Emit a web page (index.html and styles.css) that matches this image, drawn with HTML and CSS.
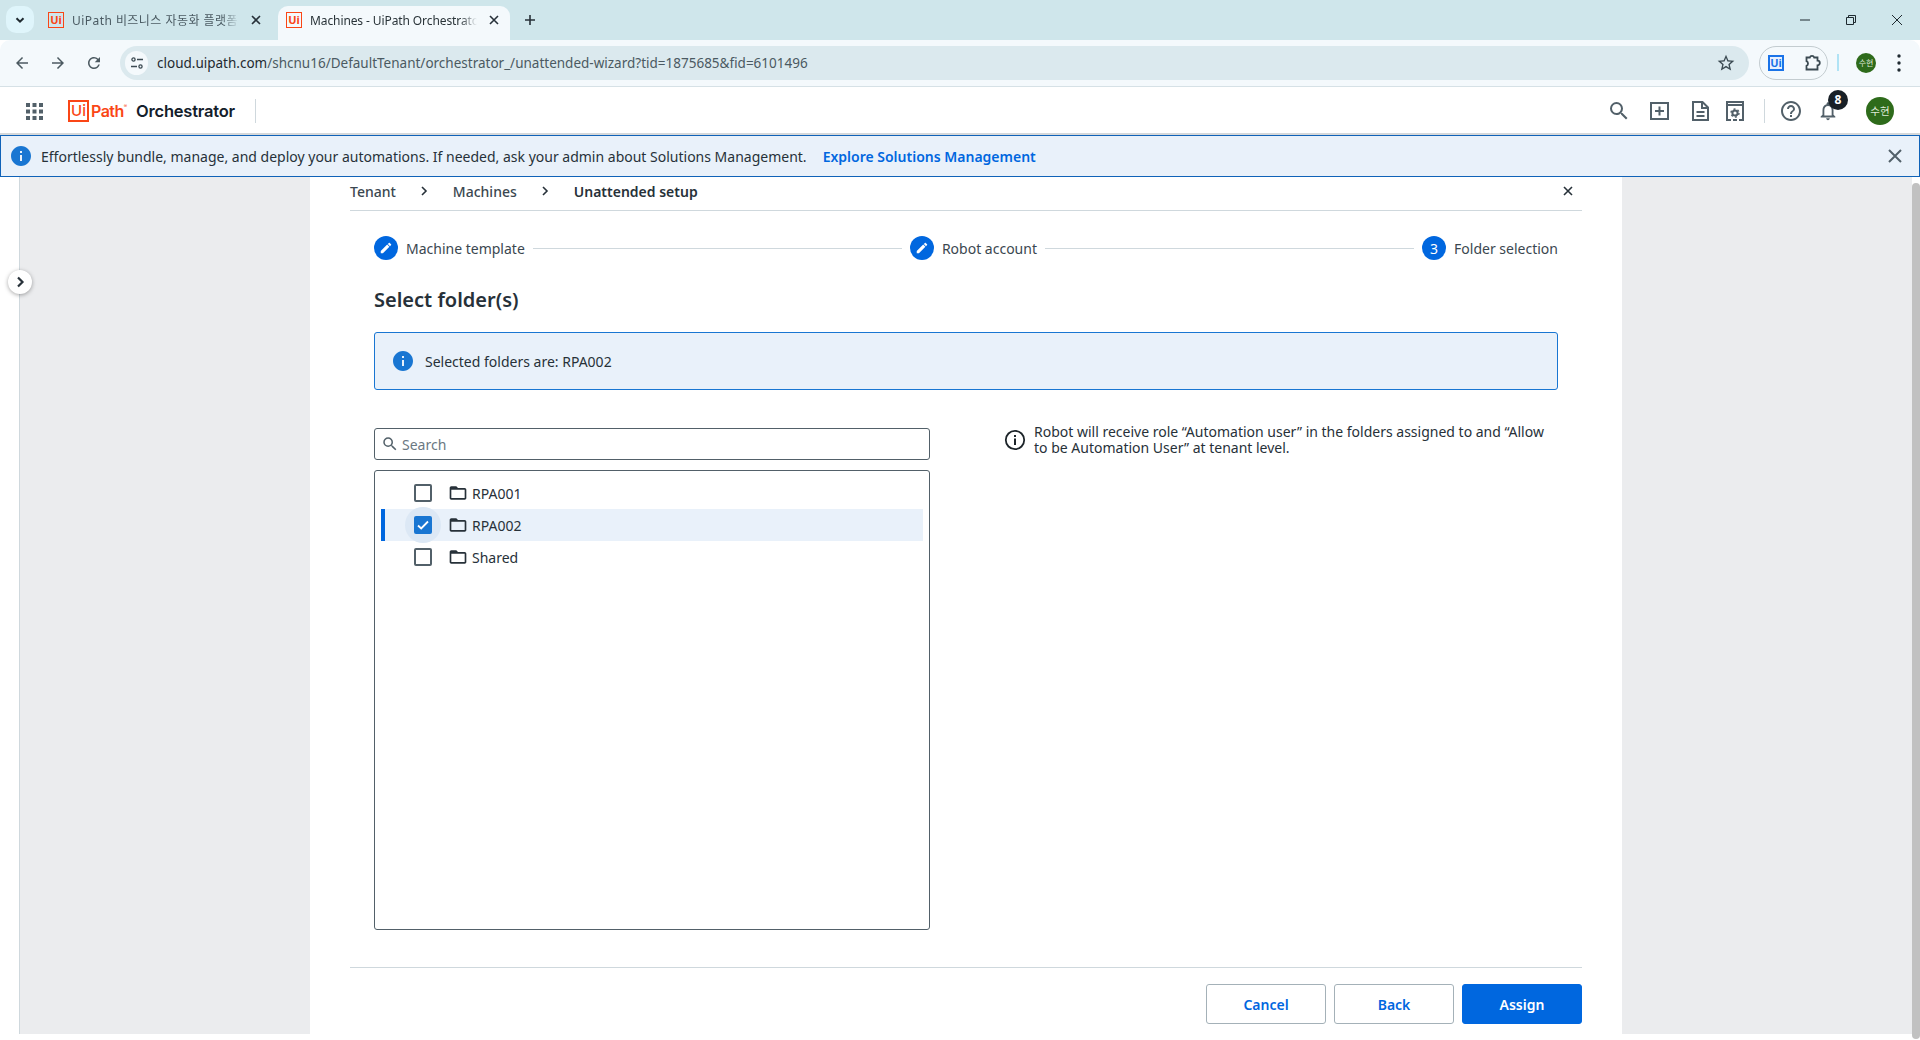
FILE: index.html
```html
<!DOCTYPE html>
<html lang="en">
<head>
<meta charset="utf-8">
<title>Machines - UiPath Orchestrator</title>
<link rel="stylesheet" href="styles.css">
</head>
<body>
<div class="tabstrip">
  <button class="tab-menu"><svg width="12" height="12" viewBox="0 0 12 12"><path d="M2.5 4.2 6 7.7l3.5-3.5" class="st2"/></svg></button>
  <div class="tab tab-idle">
    <span class="favicon">Ui</span>
    <span class="tab-title tab-title-ko">UiPath 비즈니스 자동화 플랫폼</span>
    <svg class="tab-x" width="10" height="10" viewBox="0 0 10 10"><path d="M1 1l8 8M9 1 1 9" class="st15"/></svg>
  </div>
  <div class="tab tab-active">
    <span class="favicon">Ui</span>
    <span class="tab-title tab-title-en">Machines - UiPath Orchestrator</span>
    <svg class="tab-x" width="10" height="10" viewBox="0 0 10 10"><path d="M1 1l8 8M9 1 1 9" class="st15"/></svg>
  </div>
  <svg class="tab-plus" width="12" height="12" viewBox="0 0 12 12"><path d="M6 1v10M1 6h10" class="st15"/></svg>
  <div class="win-controls">
    <svg width="10" height="10" viewBox="0 0 10 10"><path d="M0 5h10" class="st1"/></svg>
    <svg width="10" height="10" viewBox="0 0 10 10"><path d="M.5 2.5h7v7h-7zM2.5 2.5v-2h7v7h-2" class="st1"/></svg>
    <svg width="10" height="10" viewBox="0 0 10 10"><path d="M0 0l10 10M10 0 0 10" class="st1"/></svg>
  </div>
</div>

<div class="toolbar">
  <svg class="nav-icon" width="18" height="18" viewBox="0 0 24 24"><path d="M20 11H7.83l5.59-5.59L12 4l-8 8 8 8 1.41-1.41L7.83 13H20v-2z"/></svg>
  <svg class="nav-icon" width="18" height="18" viewBox="0 0 24 24"><path d="M12 4l-1.41 1.41L16.17 11H4v2h12.17l-5.58 5.59L12 20l8-8z"/></svg>
  <svg class="nav-icon" width="18" height="18" viewBox="0 0 24 24"><path d="M17.65 6.35A7.958 7.958 0 0 0 12 4c-4.42 0-7.99 3.58-7.99 8s3.57 8 7.99 8c3.73 0 6.84-2.55 7.73-6h-2.08A5.99 5.99 0 0 1 12 18c-3.31 0-6-2.69-6-6s2.69-6 6-6c1.66 0 3.14.69 4.22 1.78L13 11h7V4l-2.35 2.35z"/></svg>
  <div class="omnibox">
    <span class="site-chip"><svg width="14" height="14" viewBox="0 0 14 14"><circle cx="3.5" cy="3.5" r="1.6" class="st13"/><path d="M7 3.5h6M1 10.5h6" class="st13"/><circle cx="10.5" cy="10.5" r="1.6" class="st13"/></svg></span>
    <span class="url"><span class="url-host">cloud.uipath.com</span>/shcnu16/DefaultTenant/orchestrator_/unattended-wizard?tid=1875685&amp;fid=6101496</span>
    <svg class="star" width="20" height="20" viewBox="0 0 24 24"><path d="M22 9.24l-7.19-.62L12 2 9.19 8.63 2 9.24l5.46 4.73L5.82 21 12 17.27 18.18 21l-1.63-7.03L22 9.24zM12 15.4l-3.76 2.27 1-4.28-3.32-2.88 4.38-.38L12 6.1l1.71 4.04 4.38.38-3.32 2.88 1 4.28L12 15.4z"/></svg>
  </div>
  <div class="ext-pill">
    <span class="ext-ui">Ui</span>
    <svg width="18" height="18" viewBox="0 0 18 18"><path d="M2.500 3.500h3.300a2.300 2.300 0 0 1 4.400 0h3.300v3.200a2.300 2.300 0 0 1 0 4.600v4.200H2.500v-3.700a2.500 2.500 0 0 0 0-4.600z" class="puzzle"/></svg>
  </div>
  <span class="tb-divider"></span>
  <span class="tb-avatar">수현</span>
  <svg class="tb-dots" width="4" height="18" viewBox="0 0 4 18"><circle cx="2" cy="2" r="1.700"/><circle cx="2" cy="9" r="1.700"/><circle cx="2" cy="16" r="1.700"/></svg>
</div>

<header class="appbar">
  <svg class="apps" width="17" height="17" viewBox="0 0 17 17"><path d="M0 0h4v4H0zM6.500 0h4v4h-4zM13 0h4v4h-4zM0 6.500h4v4H0zM6.500 6.500h4v4h-4zM13 6.500h4v4h-4zM0 13h4v4H0zM6.500 13h4v4h-4zM13 13h4v4h-4z"/></svg>
  <div class="logo"><span class="logo-ui">Ui</span><span class="logo-path">Path</span><span class="logo-reg">®</span></div>
  <span class="product">Orchestrator</span>
  <span class="bar-divider"></span>
  <div class="bar-spacer"></div>
  <div class="bar-icons">
    <svg class="i-search" width="24" height="24" viewBox="0 0 24 24"><path d="M15.500 14h-.79l-.28-.27A6.471 6.471 0 0 0 16 9.500 6.500 6.500 0 1 0 9.500 16c1.610 0 3.090-.59 4.230-1.570l.27.28v.79l5 4.990L20.490 19l-4.990-5zm-6 0C7.010 14 5 11.990 5 9.500S7.010 5 9.500 5 14 7.010 14 9.500 11.990 14 9.500 14z"/></svg>
    <svg class="i-add" width="19" height="18" viewBox="0 0 19 18"><path d="M1 1h17v16H1zM9.500 4.500v9M5 9h9" class="st2"/></svg>
    <svg class="i-doc" width="17" height="20" viewBox="0 0 17 20"><path d="M1 1h9.500L16 6.500V19H1zM10 1v6h6M4.500 11h8M4.500 15h8" class="st2"/></svg>
    <svg class="i-set" width="18" height="20" viewBox="0 0 18 20"><path d="M1 1h16v3H1zM1 4v15h4M17 4v15h-4M7 19h4" class="st2"/><circle cx="9" cy="12" r="2.600" class="st2"/><circle cx="9" cy="12" r="4" class="gear"/></svg>
    <span class="bar-divider bar-divider-2"></span>
    <svg class="i-help" width="24" height="24" viewBox="0 0 24 24"><path d="M11 18h2v-2h-2v2zm1-16C6.480 2 2 6.480 2 12s4.480 10 10 10 10-4.480 10-10S17.520 2 12 2zm0 18c-4.410 0-8-3.590-8-8s3.590-8 8-8 8 3.590 8 8-3.590 8-8 8zm0-14c-2.210 0-4 1.790-4 4h2c0-1.100.9-2 2-2s2 .9 2 2c0 2-3 1.750-3 5h2c0-2.250 3-2.500 3-5 0-2.210-1.790-4-4-4z"/></svg>
    <div class="bell">
      <svg width="22" height="22" viewBox="0 0 24 24"><path d="M12 22c1.100 0 2-.9 2-2h-4c0 1.100.9 2 2 2zm6-6v-5c0-3.070-1.630-5.640-4.500-6.320V4c0-.83-.67-1.500-1.500-1.500s-1.500.67-1.500 1.500v.68C7.640 5.360 6 7.920 6 11v5l-2 2v1h16v-1l-2-2zm-2 1H8v-6c0-2.480 1.510-4.500 4-4.500s4 2.020 4 4.500v6z"/></svg>
      <span class="badge">8</span>
    </div>
    <span class="avatar">수현</span>
  </div>
</header>

<div class="banner">
  <svg width="20" height="20" viewBox="2 2 20 20"><path class="info-fill" d="M12 2C6.480 2 2 6.480 2 12s4.480 10 10 10 10-4.480 10-10S17.520 2 12 2zm1 15h-2v-6h2v6zm0-8h-2V7h2v2z"/></svg>
  <span class="banner-text">Effortlessly bundle, manage, and deploy your automations. If needed, ask your admin about Solutions Management.</span>
  <a class="banner-link">Explore Solutions Management</a>
  <svg class="banner-x" width="14" height="14" viewBox="0 0 14 14"><path d="M1 1l12 12M13 1 1 13" class="st2"/></svg>
</div>

<div class="content">
  <div class="workspace">
    <div class="stage">
      <div class="rail"></div>
      <div class="gutter"></div>
      <main class="panel">
        <nav class="crumbs">
          <span class="crumb">Tenant</span>
          <svg class="crumb-sep" width="8" height="10" viewBox="0 0 8 10"><path d="M2 1l4 4-4 4" class="st15"/></svg>
          <span class="crumb">Machines</span>
          <svg class="crumb-sep" width="8" height="10" viewBox="0 0 8 10"><path d="M2 1l4 4-4 4" class="st15"/></svg>
          <span class="crumb crumb-now">Unattended setup</span>
          <svg class="crumb-x" width="10" height="10" viewBox="0 0 10 10"><path d="M1 1l8 8M9 1 1 9" class="st15"/></svg>
        </nav>
        <div class="wizard">
          <div class="stepper">
            <span class="step-dot"><svg width="14" height="14" viewBox="0 0 24 24"><path d="M3 17.250V21h3.750L17.810 9.940l-3.750-3.750L3 17.250zM20.710 7.040c.39-.39.39-1.020 0-1.410l-2.340-2.340c-.39-.39-1.020-.39-1.410 0l-1.830 1.830 3.750 3.750 1.830-1.830z"/></svg></span>
            <span class="step-label">Machine template</span>
            <span class="step-line"></span>
            <span class="step-dot"><svg width="14" height="14" viewBox="0 0 24 24"><path d="M3 17.250V21h3.750L17.810 9.940l-3.750-3.750L3 17.250zM20.710 7.040c.39-.39.39-1.020 0-1.410l-2.340-2.340c-.39-.39-1.020-.39-1.410 0l-1.830 1.830 3.750 3.750 1.830-1.830z"/></svg></span>
            <span class="step-label">Robot account</span>
            <span class="step-line"></span>
            <span class="step-dot">3</span>
            <span class="step-label">Folder selection</span>
          </div>
          <h1 class="title">Select folder(s)</h1>
          <div class="alert">
            <svg width="20" height="20" viewBox="2 2 20 20"><path class="info-fill" d="M12 2C6.480 2 2 6.480 2 12s4.480 10 10 10 10-4.480 10-10S17.520 2 12 2zm1 15h-2v-6h2v6zm0-8h-2V7h2v2z"/></svg>
            <span>Selected folders are: RPA002</span>
          </div>
          <div class="columns">
            <section class="picker">
              <div class="search">
                <svg width="18" height="18" viewBox="0 0 24 24"><path d="M15.500 14h-.79l-.28-.27A6.471 6.471 0 0 0 16 9.500 6.500 6.500 0 1 0 9.500 16c1.610 0 3.090-.59 4.230-1.570l.27.28v.79l5 4.990L20.490 19l-4.990-5zm-6 0C7.010 14 5 11.990 5 9.500S7.010 5 9.500 5 14 7.010 14 9.500 11.990 14 9.500 14z"/></svg>
                <span>Search</span>
              </div>
              <div class="tree">
                <div class="row">
                  <span class="check"></span>
                  <svg class="folder" width="20" height="20" viewBox="0 0 24 24"><path d="M20 6h-8l-2-2H4c-1.100 0-1.990.9-1.990 2L2 18c0 1.100.9 2 2 2h16c1.100 0 2-.9 2-2V8c0-1.100-.9-2-2-2zm0 12H4V8h16v10z"/></svg>
                  <span>RPA001</span>
                </div>
                <div class="row row-on">
                  <span class="check check-on"><svg width="14" height="14" viewBox="0 0 14 14"><path d="M2 7.500l3.200 3L12 3.500" class="check-mark"/></svg></span>
                  <svg class="folder" width="20" height="20" viewBox="0 0 24 24"><path d="M20 6h-8l-2-2H4c-1.100 0-1.990.9-1.990 2L2 18c0 1.100.9 2 2 2h16c1.100 0 2-.9 2-2V8c0-1.100-.9-2-2-2zm0 12H4V8h16v10z"/></svg>
                  <span>RPA002</span>
                </div>
                <div class="row">
                  <span class="check"></span>
                  <svg class="folder" width="20" height="20" viewBox="0 0 24 24"><path d="M20 6h-8l-2-2H4c-1.100 0-1.990.9-1.990 2L2 18c0 1.100.9 2 2 2h16c1.100 0 2-.9 2-2V8c0-1.100-.9-2-2-2zm0 12H4V8h16v10z"/></svg>
                  <span>Shared</span>
                </div>
              </div>
            </section>
            <aside class="note">
              <svg width="22" height="22" viewBox="0 0 22 22"><circle cx="11" cy="11" r="9.200" class="note-ring"/><path d="M10 9.500h2v6.500h-2zM10 6h2v2h-2z" class="note-i"/></svg>
              <p>Robot will receive role “Automation user” in the folders assigned to and “Allow to be Automation User” at tenant level.</p>
            </aside>
          </div>
        </div>
        <footer class="actions">
          <button class="btn">Cancel</button>
          <button class="btn">Back</button>
          <button class="btn btn-primary">Assign</button>
        </footer>
      </main>
      <div class="gutter"></div>
    </div>
    <button class="rail-toggle"><svg width="12" height="12" viewBox="0 0 12 12"><path d="M4 1.500 8.500 6 4 10.500" class="toggle-arrow"/></svg></button>
  </div>
  <div class="scrollbar"><div class="thumb"></div></div>
</div>
</body>
</html>
```

FILE: styles.css
```css
* { box-sizing: border-box; }
html, body { margin: 0; height: 1040px; overflow: hidden; background: #fff; }
body { font-family: "Noto Sans", "Noto Sans CJK KR", sans-serif; font-size: 14px; color: #273139; display: flex; flex-direction: column; }
button { font-family: inherit; cursor: pointer; }
h1, p { margin: 0; }

.st1 { fill: none; stroke: #1f2a30; stroke-width: 1; }
.st15 { fill: none; stroke: #273139; stroke-width: 1.6; }
.st2 { fill: none; stroke: #526069; stroke-width: 2; }
.st13 { fill: none; stroke: #3b4a52; stroke-width: 1.3; }
.info-fill { fill: #1976d2; }
.gear { fill: none; stroke: #526069; stroke-width: 1.4; stroke-dasharray: 2 2.200; }

/* Browser tabs */
.tabstrip { height: 40px; background: #cfe6eb; display: flex; align-items: flex-start; padding: 6px 0 0 6px; flex: none; }
.tab-menu { width: 28px; height: 27px; border: 0; border-radius: 10px; background: #dff5fb; padding: 0; display: flex; align-items: center; justify-content: center; margin-right: 6px; }
.tab-menu .st2 { stroke: #1f2a30; }
.tab { height: 34px; display: flex; align-items: center; font-size: 12px; position: relative; padding: 0 0 6px 8px; }
.tab-idle { width: 238px; color: #4a5a62; }
.tab-active { width: 232px; background: #f4f9fc; border-radius: 10px 10px 0 0; color: #2a3439; }
.favicon { width: 16px; height: 16px; flex: none; border: 1.5px solid #fa4616; color: #fa4616; font-size: 11px; font-weight: 700; line-height: 13px; text-align: center; margin-right: 8px; }
.tab-title { flex: none; width: 167px; overflow: hidden; white-space: nowrap; -webkit-mask-image: linear-gradient(90deg, #000 90%, transparent); mask-image: linear-gradient(90deg, #000 90%, transparent); }
.tab-title-ko { letter-spacing: .45px; }
.tab-title-en { letter-spacing: -.1px; }
.tab-x { margin-left: 12px; }
.tab-plus { margin: 8px 0 0 14px; }
.win-controls { margin-left: auto; display: flex; gap: 36px; padding: 9px 18px 0 0; }

/* Browser toolbar */
.toolbar { height: 47px; background: #f4f9fc; border-bottom: 1px solid #d6e1e6; border-radius: 10px 10px 0 0; display: flex; align-items: center; padding: 0 0 1px 13px; flex: none; }
.nav-icon { fill: #4c5a61; margin-right: 18px; flex: none; }
.nav-icon:nth-child(3) { margin-right: 17px; }
.omnibox { width: 1629px; height: 34px; border-radius: 17px; background: #dbe9ee; display: flex; align-items: center; padding: 0 13px 0 5px; flex: none; }
.site-chip { width: 23px; height: 24px; border-radius: 12px; background: #f4f9fc; display: flex; align-items: center; justify-content: center; flex: none; }
.url { margin-left: 9px; font-size: 13.500px; color: #4b5a62; white-space: nowrap; }
.url-host { color: #1f2a30; }
.star { fill: #3b4a52; margin-left: auto; flex: none; }
.ext-pill { width: 69px; height: 34px; margin-left: 10px; border: 1px solid #c3ccd0; border-radius: 17px; display: flex; align-items: center; justify-content: space-between; padding: 0 5px 0 8px; flex: none; }
.ext-ui { width: 16px; height: 16px; border: 2px solid #1a73e8; background: #e8f0fe; color: #1a73e8; font-size: 11px; font-weight: 700; line-height: 12px; text-align: center; }
.puzzle { fill: none; stroke: #3b4a52; stroke-width: 1.8; }
.tb-divider { width: 2px; height: 17px; background: #b0e3f5; margin-left: 9px; flex: none; }
.tb-avatar { width: 20px; height: 20px; border-radius: 50%; background: #2e6b1b; color: #dfe9d8; font-size: 8px; line-height: 20px; text-align: center; margin-left: 17px; flex: none; }
.tb-dots { fill: #1f2a30; margin-left: 21px; flex: none; }

/* App bar */
.appbar { height: 48px; background: #fff; border-bottom: 2px solid #d5d8da; display: flex; align-items: center; padding: 2px 0 0 26px; flex: none; }
.apps { fill: #526069; flex: none; margin-right: 25px; }
.logo { display: flex; align-items: center; flex: none; width: 68px; color: #fa4616; font-family: Inter, sans-serif; }
.logo-ui { width: 21px; height: 22px; border: 2px solid #fa4616; font-size: 15px; font-weight: 500; line-height: 18px; text-align: center; }
.logo-path { font-size: 16px; font-weight: 600; margin-left: 2px; letter-spacing: -.5px; }
.logo-reg { font-size: 5px; align-self: flex-start; margin-top: 3px; }
.product { font-family: Inter, sans-serif; font-size: 16.500px; font-weight: 600; color: #14202b; letter-spacing: -.2px; width: 119px; flex: none; white-space: nowrap; }
.bar-divider { width: 1px; height: 24px; background: #cfd8dd; flex: none; }
.bar-spacer { flex: 1; }
.bar-icons { display: flex; align-items: center; padding-right: 26px; position: relative; }
.bar-icons svg { fill: #526069; flex: none; }
.i-search { margin-right: 19px; }
.i-add { margin-right: 23px; }
.i-doc { margin-right: 17px; }
.i-set { margin-right: 20px; }
.bar-divider-2 { margin-right: 14px; }
.i-help { margin-right: 14px; }
.bell { position: relative; width: 22px; height: 22px; margin-right: 27px; }
.badge { position: absolute; top: -10px; left: 11px; width: 20px; height: 20px; border-radius: 50%; background: #182027; color: #fff; font-size: 12px; font-weight: 700; line-height: 20px; text-align: center; }
.avatar { width: 28px; height: 28px; border-radius: 50%; background: #2e6b1b; color: #dfe9d8; font-size: 10.500px; line-height: 28px; text-align: center; flex: none; }

/* Banner */
.banner { height: 42px; flex: none; background: #e9f1fa; border: 1px solid #0f62b8; display: flex; align-items: center; padding: 0 17px 0 10px; }
.banner-text { margin-left: 10px; color: #273139; white-space: nowrap; }
.banner-link { margin-left: 16px; color: #0067df; font-weight: 600; white-space: nowrap; }
.banner-x { margin-left: auto; }

/* Page */
.content { flex: 1; display: flex; min-height: 0; }
.workspace { flex: 1; position: relative; }
.stage { height: 857px; display: flex; }
.rail { width: 20px; border-right: 1px solid #cfd8dd; background: #fff; flex: none; }
.gutter { flex: 1; background: #ebecee; }
.panel { width: 1312px; flex: none; background: #fff; padding: 0 40px; display: flex; flex-direction: column; }
.rail-toggle { position: absolute; left: 8px; top: 93px; width: 24px; height: 24px; border-radius: 50%; border: 0; padding: 0; background: #fff; box-shadow: 0 1px 4px rgba(0,0,0,.35); display: flex; align-items: center; justify-content: center; }
.toggle-arrow { fill: none; stroke: #273139; stroke-width: 2.200; }
.scrollbar { width: 8px; flex: none; padding: 6px 0 1px; }
.thumb { height: 100%; background: #c1c1c1; border-radius: 4px; }

.crumbs { height: 34px; border-bottom: 1px solid #cfd8dd; display: flex; align-items: center; flex: none; padding-bottom: 5px; }
.crumb { color: #3b4750; font-weight: 500; }
.crumb-now { color: #273139; font-weight: 600; }
.crumb-sep { margin: 0 25px 0 24px; flex: none; }
.crumb-x { margin-left: auto; margin-right: 9px; }

.wizard { flex: 1; padding: 25px 24px 0; }
.stepper { display: flex; align-items: center; height: 24px; }
.step-dot { width: 24px; height: 24px; border-radius: 50%; background: #0067df; color: #fff; font-size: 14px; display: flex; align-items: center; justify-content: center; flex: none; }
.step-dot svg { fill: #fff; }
.step-label { margin-left: 8px; white-space: nowrap; color: #3b4750; flex: none; }
.step-line { flex: 1; height: 1px; background: #cfd8dd; margin: 0 8px; }
.title { font-size: 20px; font-weight: 600; color: #273139; line-height: 28px; margin-top: 26px; }
.alert { height: 58px; margin-top: 18px; background: #e9f1fa; border: 1px solid #1976d2; border-radius: 3px; display: flex; align-items: center; gap: 12px; padding-left: 18px; }
.columns { display: flex; margin-top: 38px; }
.picker { width: 556px; flex: none; }
.search { height: 32px; border: 1px solid #526069; border-radius: 3px; display: flex; align-items: center; gap: 3px; padding-left: 6px; color: #6b7882; }
.search svg { fill: #526069; flex: none; }
.tree { height: 460px; margin-top: 10px; border: 1px solid #526069; border-radius: 3px; padding: 6px 6px 0 6px; }
.row { height: 32px; display: flex; align-items: center; padding-left: 33px; }
.row-on { background: #e9f1fa; box-shadow: inset 4px 0 0 #0067df; }
.check { width: 18px; height: 18px; border: 2px solid #526069; border-radius: 2px; flex: none; margin-right: 16px; display: flex; align-items: center; justify-content: center; position: relative; }
.check-on { background: #1976d2; border-color: #1976d2; }
.check-on::before { content: ""; position: absolute; left: -11px; top: -11px; width: 36px; height: 36px; border-radius: 50%; background: #dce8f5; z-index: 0; }
.check-on::after { content: ""; position: absolute; inset: -2px; background: #1976d2; border-radius: 2px; z-index: 1; }
.check-on svg { position: relative; z-index: 2; flex: none; }
.check-mark { fill: none; stroke: #fff; stroke-width: 1.800; }
.folder { fill: #273139; flex: none; margin-right: 4px; }
.note { flex: 1; display: flex; gap: 8px; padding: 0 0 0 74px; }
.note svg { flex: none; margin-top: 1px; }
.note p { font-size: 14px; line-height: 16px; color: #273139; margin-top: -4px; }
.note-ring { fill: none; stroke: #1c2429; stroke-width: 1.800; }
.note-i { fill: #1c2429; }

.actions { height: 67px; flex: none; border-top: 1px solid #cfd8dd; display: flex; justify-content: flex-end; gap: 8px; padding-top: 16px; margin-bottom: 0; }
.btn { width: 120px; height: 40px; border: 1px solid #a4b1b8; border-radius: 3px; background: #fff; color: #0067df; font-size: 14px; font-weight: 600; padding: 0; }
.btn-primary { background: #0067df; border-color: #0067df; color: #fff; }
```
